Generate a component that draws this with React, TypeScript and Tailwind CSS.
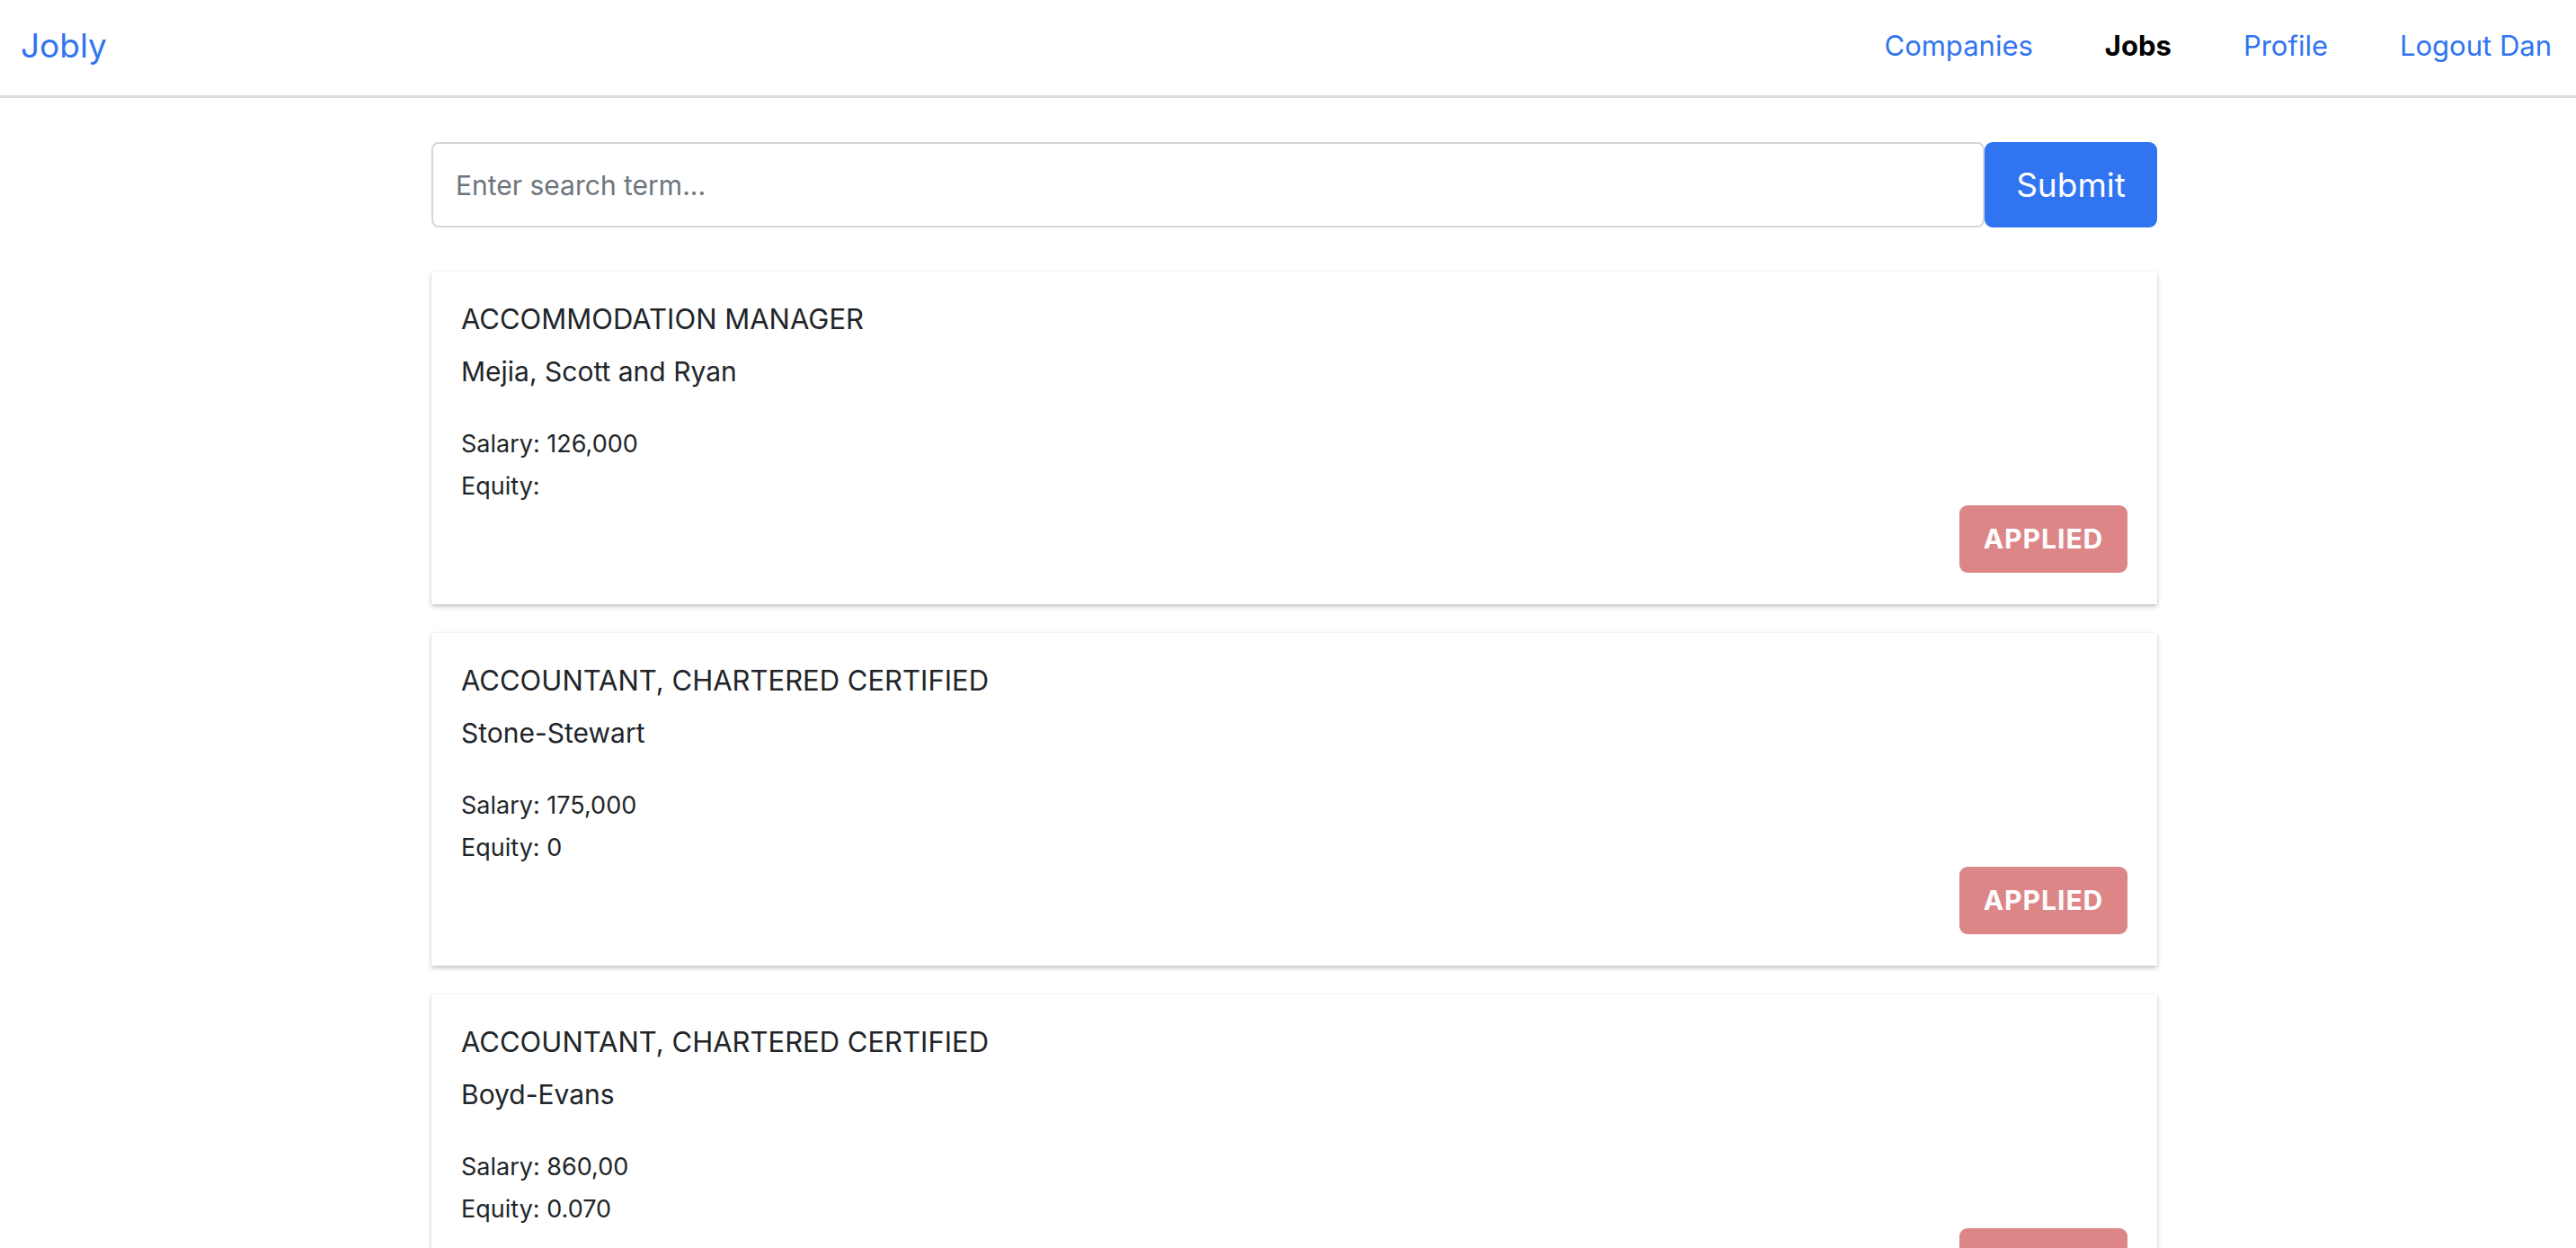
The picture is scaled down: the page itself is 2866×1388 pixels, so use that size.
const jobs = [
  { title: "Accommodation Manager", company: "Mejia, Scott and Ryan", salary: "126,000", equity: "" },
  { title: "Accountant, chartered certified", company: "Stone-Stewart", salary: "175,000", equity: "0" },
  { title: "Accountant, chartered certified", company: "Boyd-Evans", salary: "860,00", equity: "0.070" },
];

function NavBar() {
  return (
    <nav className="flex h-[109px] items-center justify-between border-b-[3px] border-[#dcdcdc] bg-white pb-[4px] pl-[23px] pr-[27px]">
      <a className="text-[37px] leading-[46px] text-[#3174f1]">Jobly</a>
      <div className="flex items-center gap-[80px] text-[31px] leading-[36px]">
        <a className="text-[#3174f1]">Companies</a>
        <a className="font-bold text-black">Jobs</a>
        <a className="text-[#3174f1]">Profile</a>
        <a className="text-[#3174f1]">Logout Dan</a>
      </div>
    </nav>
  );
}

function JobCard({ title, company, salary, equity }: (typeof jobs)[number]) {
  return (
    <div className="flex h-[370px] flex-col bg-white px-[33px] pt-[34px] text-[#212529] shadow-[0_3px_5px_rgba(0,0,0,0.2),0_0_3px_rgba(0,0,0,0.08)]">
      <h6 className="text-[31px] uppercase leading-[37px]">{title}</h6>
      <p className="mt-[23px] text-[30px] leading-[35px]">{company}</p>
      <div className="mt-[39px] text-[27px]">
        <p className="h-[48px] leading-[48px]">Salary: {salary}</p>
        <p className="h-[46px] leading-[46px]">Equity: {equity}</p>
      </div>
      <button className="mt-[-2px] h-[75px] w-[187px] self-end rounded-[9px] bg-[#dc8688] text-[30px] font-bold tracking-[1px] text-white">
        APPLIED
      </button>
    </div>
  );
}

export default function App() {
  return (
    <div className="min-h-screen bg-white font-['Inter',sans-serif]">
      <NavBar />
      <main className="ml-[480px] w-[1920px] pt-[49px]">
        <form className="flex h-[95px]">
          <input
            className="h-full flex-1 rounded-[8px] border-2 border-[#d3d7dc] pl-[25px] text-[30px] text-[#212529] outline-none placeholder:text-[#6c757d]"
            placeholder="Enter search term..."
          />
          <button className="h-full w-[192px] rounded-[9px] bg-[#3074f2] text-[37px] text-white" type="button">
            Submit
          </button>
        </form>
        <div className="mt-[49px] flex flex-col gap-[32px]">
          {jobs.map((job, i) => (
            <JobCard key={i} {...job} />
          ))}
        </div>
      </main>
    </div>
  );
}
